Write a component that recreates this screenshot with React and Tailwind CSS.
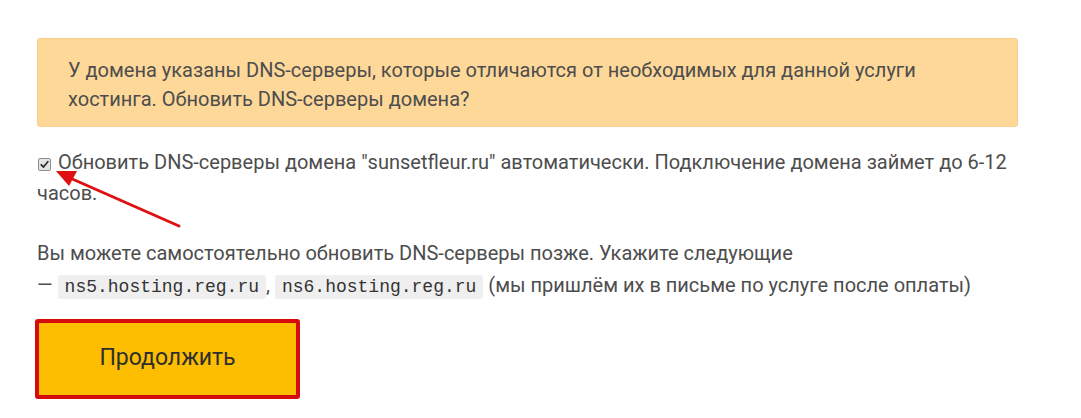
import React from 'react';

const Code = ({ children }) => (
  <code className="bg-[#efefef] rounded-[3px] px-[7px] py-[2px] text-[18px] text-[#333] font-['Liberation_Mono',monospace]">{children}</code>
);

const Checkbox = () => (
  <span className="inline-flex items-center justify-center w-[13px] h-[13px] ml-[1px] mr-[7px] align-[0px] border border-[#8f8f8f] rounded-[2px] bg-[#e4e4e4]">
    <svg width="9" height="9" viewBox="0 0 9 9">
      <path d="M1.3 4.8 L3.5 7 L7.8 1.8" fill="none" stroke="#333" strokeWidth="1.8" strokeLinecap="round" strokeLinejoin="round" />
    </svg>
  </span>
);

export default function App() {
  return (
    <div className="relative w-[1081px] h-[418px] bg-white overflow-hidden font-['Roboto',sans-serif] text-[20px] text-[#4d4d4d]">
      <div className="pt-[38px] pl-[37px] w-[1018px]">
        {/* Warning box */}
        <div className="bg-[#fed899] border border-[#f8cf8a] rounded-[3px] pl-[30px] pr-6 pt-[17px] pb-[12px] leading-[29px]">
          У домена указаны DNS-серверы, которые отличаются от необходимых для данной услуги<br />
          хостинга. Обновить DNS-серверы домена?
        </div>

        <label className="block mt-[20px] pr-[8px] leading-[31px]">
          <Checkbox />
          Обновить DNS-серверы домена "sunsetfleur.ru" автоматически. Подключение домена займет до 6-12 часов.
        </label>

        <p className="mt-[28px] leading-[32px]">
          Вы можете самостоятельно обновить DNS-серверы позже. Укажите следующие<br />
          — <Code>ns5.hosting.reg.ru</Code>, <Code>ns6.hosting.reg.ru</Code> (мы пришлём их в письме по услуге после оплаты)
        </p>

        <div className="mt-[16px] -ml-[2px] w-[265px] h-[80px] border-[4px] border-[#d40c0c] rounded-[3px] bg-[#fdbd00] flex items-center justify-center">
          <span className="text-[23px] text-[#2e2e2e] pb-[2px]">Продолжить</span>
        </div>
      </div>

      {/* Red annotation arrow */}
      <svg className="absolute left-0 top-0 pointer-events-none" width="1081" height="418">
        <path d="M179 226 L70 178" stroke="#e01010" strokeWidth="3" strokeLinecap="round" />
        <path d="M56 171 L77 171 L69 186 Z" fill="#e01010" />
      </svg>
    </div>
  );
}
